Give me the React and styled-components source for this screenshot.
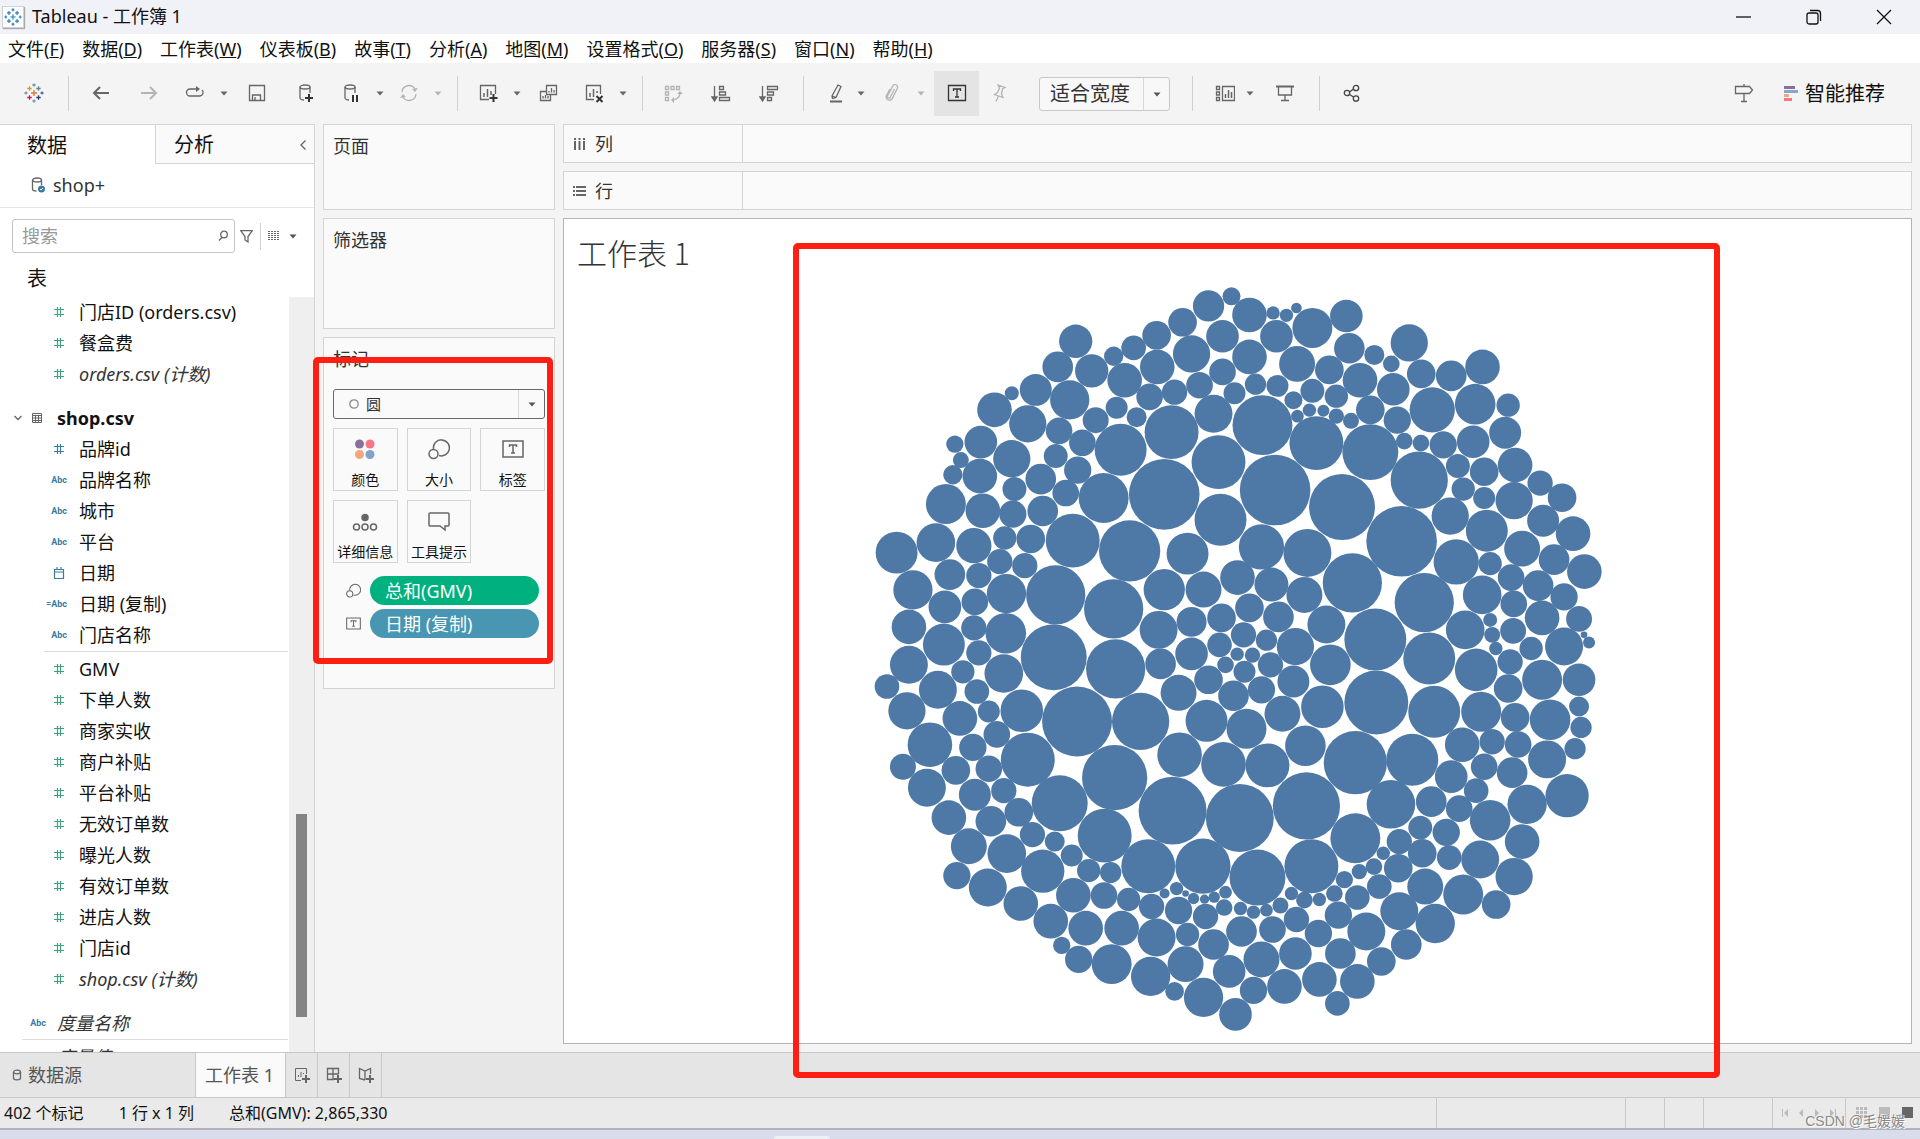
import React from 'react';
import styled, { createGlobalStyle, css } from 'styled-components';

const GlobalStyle = createGlobalStyle`
  *, *::before, *::after { box-sizing: border-box; }
  html, body, #root { height: 100%; }
  body {
    margin: 0;
    background: #d9dcea;
    color: #111;
    font-family: 'Noto Sans', 'Noto Sans CJK SC', sans-serif;
    font-size: 18px;
    line-height: 24px;
  }
  button, input, select { font: inherit; color: inherit; }
  button { background: none; border: 0; padding: 0; margin: 0; }
  svg { display: block; flex: none; }
  h1, h2, ul { margin: 0; padding: 0; font-weight: 400; list-style: none; }
`;

/* ---------- window frame ---------- */

const Window = styled.div`
  position: relative;
  display: flex;
  flex-direction: column;
  height: 100vh;
  min-height: 700px;
`;

const TitleBar = styled.header`
  display: flex;
  align-items: center;
  height: 34px;
  padding: 0 1px 1px 2px;
  background: #f1f2f8;
`;

const AppIcon = styled.span`
  display: flex;
  align-items: center;
  justify-content: center;
  width: 22px;
  height: 22px;
  background: #fff;
  border: 1px solid #d0d0d4;
  box-shadow: 1px 1px 1px #aaa;
`;

const WindowTitle = styled.h1`
  flex: 1;
  padding: 0 0 2px 8px;
  font-size: 18px;
  line-height: 24px;
`;

const CaptionButton = styled.button`
  display: flex;
  align-items: center;
  justify-content: center;
  width: 70px;
  height: 34px;
`;

const MenuBar = styled.nav`
  display: flex;
  align-items: center;
  gap: 18px;
  height: 29px;
  padding-left: 8px;
  background: #fff;
`;

const MenuItem = styled.button`
  white-space: nowrap;
  line-height: 24px;
`;

/* ---------- toolbar ---------- */

const Toolbar = styled.div`
  display: flex;
  align-items: center;
  height: 61px;
  padding: 0 35px 1px 0;
  background: #f4f4f4;
`;

const gapBefore = css`
  margin-left: ${(p) => p.$gap}px;
`;

const ToolButton = styled.button`
  ${gapBefore}
  display: flex;
  align-items: center;
  justify-content: center;
  width: ${(p) => (p.$active ? 45 : 24)}px;
  height: 45px;
  background: ${(p) => (p.$active ? '#e4e4e4' : 'none')};
`;

const CaretButton = styled.button`
  ${gapBefore}
  display: flex;
  align-items: center;
  justify-content: center;
  width: 10px;
  height: 30px;
`;

const Separator = styled.span`
  ${gapBefore}
  width: 1px;
  height: 35px;
  background: #d0d0d0;
`;

const SelectFrame = styled.span`
  ${gapBefore}
  position: relative;
  display: block;
  width: ${(p) => p.$width || '100%'};
  margin-top: ${(p) => (p.$width ? 2 : 0)}px;
`;

const FitSelect = styled.select`
  display: block;
  width: 100%;
  height: 34px;
  padding: 0 32px 0 10px;
  appearance: none;
  background: #f8f8f8;
  border: 1px solid #c8c8c8;
  border-radius: 3px;
  color: #333;
  font-size: 20px;
  line-height: 30px;
`;

const SelectArrow = styled.span`
  position: absolute;
  top: 1px;
  right: 1px;
  bottom: 1px;
  width: 26px;
  display: flex;
  align-items: center;
  justify-content: center;
  border-left: 1px solid #d8d8d8;
  pointer-events: none;
`;

const Spacer = styled.span`
  flex: 1;
`;

const ShowMe = styled.button`
  display: flex;
  align-items: center;
  gap: 7px;
  margin-left: 30px;
  padding-top: 2px;
  font-size: 20px;
  line-height: 28px;
`;

/* ---------- body ---------- */

const Body = styled.main`
  display: flex;
  flex: 1;
  min-height: 0;
  background: #f4f4f4;
`;

const DataPane = styled.aside`
  display: flex;
  flex-direction: column;
  width: 315px;
  min-height: 0;
  background: #fff;
  border-top: 1px solid #d4d4d4;
  border-right: 1px solid #d4d4d4;
`;

const PaneTabs = styled.div`
  display: flex;
  height: 39px;
`;

const PaneTab = styled.button`
  display: flex;
  align-items: center;
  justify-content: space-between;
  width: ${(p) => (p.$active ? '155px' : 'auto')};
  flex: ${(p) => (p.$active ? 'none' : 1)};
  padding: 2px 7px 0 ${(p) => (p.$active ? 27 : 18)}px;
  font-size: 20px;
  line-height: 28px;
  background: ${(p) => (p.$active ? '#fff' : '#fafafa')};
  border: solid #d4d4d4;
  border-width: ${(p) => (p.$active ? '0' : '0 0 1px 1px')};
`;

const DataSource = styled.div`
  display: flex;
  align-items: center;
  gap: 7px;
  height: 44px;
  padding: 0 0 2px 31px;
  color: #333;
  border-bottom: 1px solid #e4e4e4;
`;

const SearchRow = styled.div`
  display: flex;
  align-items: center;
  height: 56px;
  padding: 0 16px 0 12px;
`;

const SearchFrame = styled.label`
  position: relative;
  width: 223px;
`;

const SearchInput = styled.input`
  display: block;
  width: 100%;
  height: 34px;
  padding: 0 30px 0 9px;
  border: 1px solid #c4c4c4;
  border-radius: 3px;
  &::placeholder { color: #999; opacity: 1; }
`;

const SearchGlyph = styled.span`
  position: absolute;
  top: 11px;
  right: 7px;
`;

const SmallButton = styled.button`
  ${gapBefore}
  display: flex;
`;

const ThinLine = styled.span`
  width: 1px;
  height: 27px;
  margin-left: 7px;
  background: #d0d0d0;
`;

const TablesHeading = styled.h2`
  height: 33px;
  padding-left: 27px;
  font-size: 20px;
  line-height: 30px;
`;

const ListArea = styled.div`
  display: flex;
  flex: 1;
  min-height: 0;
`;

const FieldList = styled.div`
  flex: 1;
  overflow: hidden;
`;

const FieldRow = styled.li`
  display: flex;
  align-items: center;
  gap: ${(p) => (p.$top ? 11 : 12)}px;
  height: 31px;
  padding: 0 0 1px ${(p) => (p.$top ? 22 : 43)}px;
  font-style: ${(p) => (p.$italic ? 'italic' : 'normal')};
  color: ${(p) => (p.$italic ? '#333' : '#111')};
  white-space: nowrap;
`;

const FieldIcon = styled.span`
  display: flex;
  justify-content: flex-end;
  width: 24px;
  color: ${(p) => (p.$measure ? '#3fa07d' : '#3a7ca0')};
`;

const TypeText = styled.span`
  font: normal 700 9px/12px Roboto, sans-serif;
`;

const TableRow = styled.div`
  display: flex;
  align-items: center;
  height: 31px;
  margin-top: 13px;
  padding: 0 0 1px 13px;
  font-weight: 700;
`;

const TableName = styled.span`
  padding-left: 15px;
`;

const FieldDivider = styled.div`
  height: 1px;
  margin: 0 1px 2px ${(p) => p.$indent}px;
  background: #dcdcdc;
`;

const TopFields = styled.ul`
  && { margin-top: 13px; }
`;

const ScrollTrack = styled.div`
  display: flex;
  flex-direction: column;
  align-items: center;
  width: 25px;
  background: #efefef;
`;

const TrackPart = styled.span`
  flex: ${(p) => p.$share};
`;

const Thumb = styled.span`
  flex: 203;
  width: 11px;
  background: #848484;
`;

/* ---------- cards ---------- */

const CardColumn = styled.section`
  display: flex;
  flex-direction: column;
  gap: 8px;
  width: 232px;
  margin-left: 8px;
`;

const Card = styled.div`
  position: relative;
  min-height: ${(p) => p.$min}px;
  padding: 9px;
  background: #fafafa;
  border: 1px solid #d4d4d4;
`;

const CardTitle = styled.h2`
  color: #333;
  font-size: 18px;
  line-height: 24px;
`;

const MarkSelect = styled.select`
  display: block;
  width: 100%;
  height: 30px;
  padding: 0 28px 0 32px;
  appearance: none;
  background: #fafafa;
  border: 1px solid #666;
  border-radius: 3px;
  color: #333;
  font-size: 15px;
  line-height: 24px;
`;

const MarkSelectWrap = styled.div`
  margin: 18px 0 9px;
`;

const SelectGlyph = styled.span`
  position: absolute;
  top: 10px;
  left: 16px;
  pointer-events: none;
`;

const MarkGrid = styled.div`
  display: grid;
  grid-template-columns: repeat(3, 1fr);
  gap: 9px;
`;

const MarkButton = styled.button`
  display: flex;
  flex-direction: column;
  align-items: center;
  justify-content: space-between;
  height: 63px;
  padding: 9px 0 0;
  border: 1px solid #d4d4d4;
  font-size: 14px;
  line-height: 20px;
  white-space: nowrap;
`;

const PillList = styled.div`
  display: grid;
  gap: 4px;
  padding: 13px 6px 0 13px;
`;

const PillRow = styled.div`
  display: flex;
  align-items: center;
  gap: 9px;
`;

const Pill = styled.button`
  flex: 1;
  height: 29px;
  padding: 0 15px;
  border-radius: 15px;
  background: ${(p) => p.$color};
  color: #fff;
  text-align: left;
  line-height: 28px;
`;

const Highlight = styled.div`
  position: absolute;
  inset: ${(p) => p.$inset};
  z-index: 2;
  border: 6px solid #ff1f12;
  border-radius: 5px;
  pointer-events: none;
`;

/* ---------- view ---------- */

const ViewColumn = styled.section`
  display: flex;
  flex: 1;
  flex-direction: column;
  gap: 8px;
  min-width: 0;
  padding: 0 8px 8px;
`;

const Shelf = styled.div`
  display: flex;
  height: 39px;
  background: #fafafa;
  border: 1px solid #d4d4d4;
`;

const ShelfLabel = styled.div`
  display: flex;
  align-items: center;
  gap: 9px;
  width: 179px;
  padding-left: 9px;
  color: #333;
  border-right: 1px solid #d4d4d4;
`;

const Sheet = styled.div`
  position: relative;
  display: flex;
  flex: 1;
  flex-direction: column;
  min-height: 0;
  background: #fff;
  border: 1px solid #b4b4b4;
`;

const SheetTitle = styled.h2`
  height: 61px;
  padding: 13px 13px 0;
  color: #333;
  font-family: 'Noto Sans CJK SC', sans-serif;
  font-size: 30px;
  font-weight: 300;
  line-height: 40px;
`;

const ChartArea = styled.div`
  display: flex;
  flex: 1;
  min-height: 0;
  padding-right: 4px;
  svg { width: 100%; height: 100%; }
`;

/* ---------- bottom ---------- */

const SheetTabs = styled.nav`
  display: flex;
  height: 46px;
  background: #e5e5e5;
  border: solid #c8c8c8;
  border-width: 1px 0;
`;

const SheetTab = styled.button`
  display: flex;
  align-items: center;
  gap: 6px;
  width: ${(p) => p.$width}px;
  padding-left: ${(p) => (p.$active ? 9 : 12)}px;
  background: ${(p) => (p.$active ? '#fafafa' : 'none')};
  color: #555;
  border-right: 1px solid #c8c8c8;
  white-space: nowrap;
`;

const NewTab = styled.button`
  display: flex;
  align-items: center;
  justify-content: center;
  width: 32px;
  border-right: 1px solid #c8c8c8;
`;

const StatusBar = styled.footer`
  display: flex;
  align-items: center;
  height: 32px;
  padding-left: 4px;
  background: #eaeaea;
  border-bottom: 2px solid #b0b1bd;
  font-size: 16px;
`;

const StatusText = styled.span`
  padding-right: 35px;
  white-space: nowrap;
`;

const StatusCell = styled.span`
  display: flex;
  align-items: center;
  justify-content: space-between;
  width: ${(p) => p.$width}px;
  height: 100%;
  padding: 0 ${(p) => p.$pad || 0}px;
  border-left: 1px solid #c8c8c8;
`;

const Desktop = styled.div`
  display: flex;
  justify-content: center;
  height: 9px;
  padding: 6px 316px 0 0;
`;

const TaskbarEdge = styled.span`
  width: 56px;
  height: 3px;
  background: #eef0f7;
  border-radius: 4px 4px 0 0;
`;

const Watermark = styled.span`
  position: absolute;
  right: 15px;
  bottom: 8px;
  color: #8a8a8a;
  font: 14px/20px 'Liberation Sans', 'Noto Sans CJK SC', sans-serif;
  text-shadow: 1px 1px 0 #fff;
`;

/* ---------- icons ---------- */

const Icon = ({ w = 20, h = 20, color = '#666', children, ...rest }) => (
  <svg width={w} height={h} viewBox={`0 0 ${w} ${h}`} fill="none" stroke={color} strokeWidth="1.3" aria-hidden="true" {...rest}>
    {children}
  </svg>
);

const Caret = ({ color = '#555' }) => (
  <svg width="8" height="5" viewBox="0 0 8 5" fill={color} aria-hidden="true"><path d="M0.500 0.500h7L4 4.500z" /></svg>
);

const plus = (x, y, r) => `M${x - r} ${y}h${2 * r}M${x} ${y - r}v${2 * r}`;

const Logo = ({ size = 20, mono }) => {
  const marks = [
    [10, 10, 3, '#e8762c'], [5.500, 5.500, 2.200, '#eb912c'], [14.500, 5.500, 2.200, '#59879b'], [5.500, 14.500, 2.200, '#c72035'],
    [14.500, 14.500, 2.200, '#1f447e'], [10, 2, 1.600, '#5c9aa8'], [10, 18, 1.600, '#7199a6'], [2, 10, 1.600, '#7199a6'], [18, 10, 1.600, '#5b6591'],
  ];
  return (
    <svg width={size} height={size} viewBox="0 0 20 20" fill="none" strokeWidth="1.3" aria-hidden="true">
      {marks.map(([x, y, r, c]) => <path key={`${x}-${y}`} d={plus(x, y, r)} stroke={mono || c} />)}
    </svg>
  );
};

const icons = {
  back: <Icon strokeWidth="2"><path d="M18 10H3M9 4l-6 6 6 6" /></Icon>,
  forward: <Icon color="#b4b4b4" strokeWidth="2"><path d="M2 10h15M11 4l6 6-6 6" /></Icon>,
  redo: <Icon><path d="M12 6H5a3.500 3.500 0 0 0 0 7h10a3.500 3.500 0 0 0 2-6" /><path d="M11 3l4 3-4 3z" fill="#666" stroke="none" /></Icon>,
  save: <Icon><path d="M2.500 2.500h15v15h-15zM5.500 17v-5h8v5M8 17v-3" /></Icon>,
  addSource: (
    <Icon><path d="M5 4v11c0 1 2 2 4 2M15 4v6" /><ellipse cx="10" cy="4" rx="5" ry="2" /><path d="M14 11v8M10 15h8" stroke="#333" strokeWidth="2" /></Icon>
  ),
  pause: (
    <Icon><path d="M4 4v11c0 1 2 2 4 2M14 4v6" /><ellipse cx="9" cy="4" rx="5" ry="2" /><path d="M12 12v7M16 12v7" stroke="#333" strokeWidth="2" /></Icon>
  ),
  refresh: (
    <Icon color="#b4b4b4"><path d="M3 9a7 7 0 0 1 13-3M17 11a7 7 0 0 1-13 3" /><path d="M19 5l-3 4-3-3zM1 15l3-4 3 3z" fill="#b4b4b4" stroke="none" /></Icon>
  ),
  newSheet: (
    <Icon><path d="M11 16.500H2.500v-14h15V11" /><path d="M6 14v-4M9.500 14V6M13 12V8" strokeWidth="1.500" /><path d="M15.500 11v8M11.500 15h8" stroke="#333" strokeWidth="2" /></Icon>
  ),
  duplicate: (
    <Icon><path d="M8.500 2.500h10v9h-10zM8 8.500H2.500v9h10V12" /><path d="M11 9.500V8M13.500 9.500V5M16 9.500V7M5 15.500V13M7.500 15.500V12M10 15.500V13" /></Icon>
  ),
  clear: (
    <Icon><path d="M10 16.500H2.500v-14h14V11" /><path d="M6 14v-4M9.500 14V6M13 10V8" strokeWidth="1.500" /><path d="M12.500 13l6 6M18.500 13l-6 6" stroke="#333" strokeWidth="2" /></Icon>
  ),
  swap: (
    <Icon color="#b4b4b4"><path d="M2.500 3.500h3v3h-3zM8 3.500h3v3H8zM13.500 3.500h3v3h-3zM2.500 9h3v3h-3zM2.500 14.500h3v3h-3zM17 10c0 4-2 6-7 7" /><path d="M14 11l3-3 3 3zM11 14l-3 3 3 3z" fill="#b4b4b4" stroke="none" /></Icon>
  ),
  asc: <Icon><path d="M3.500 3v13M8.500 3.500h4v3h-4zM8.500 9h6v3h-6zM8.500 14.500h10v3h-10z" /><path d="M1 14h5l-2.500 4z" fill="#666" /></Icon>,
  desc: <Icon><path d="M3.500 3v13M8.500 3.500h10v3h-10zM8.500 9h6v3h-6zM8.500 14.500h4v3h-4z" /><path d="M1 14h5l-2.500 4z" fill="#666" /></Icon>,
  highlight: <Icon><path d="M6 13L12 2l3 1.500-5 11-3.500 1zM6 13l4 1.500" /><path d="M4 18.500h12" strokeWidth="2" /></Icon>,
  clip: <Icon color="#b4b4b4"><path d="M12.500 6l-4 8a1.500 1.500 0 0 1-3-1l5-9.500a2.500 2.500 0 0 1 5 1.500l-5.500 11a3.500 3.500 0 0 1-6-2.500L8 6" /></Icon>,
  label: <Icon color="#333"><path d="M1.500 2.500h17v15h-17zM6.500 8V6h7v2M10 6v8M8 14h4" /></Icon>,
  pin: <Icon color="#b4b4b4"><path d="M9 2l7 2.500-2.500 1.500-1 5 1.500 3.500L5.500 11.500 8.500 9.500 10.500 5zM9.500 13L7 18.500" /></Icon>,
  cards: (
    <Icon><path d="M1.500 3.500h3v3h-3zM1.500 9h3v3h-3zM1.500 14.500h3v3h-3zM7.500 3.500h12v14h-12z" /><path d="M10.500 15v-4M13.500 15V7M16.500 15V9" strokeWidth="1.500" /></Icon>
  ),
  present: <Icon><path d="M1 3.500h18" strokeWidth="2" /><path d="M3.500 4v8h13V4M10 12v6M6 17.500h8" /></Icon>,
  share: <Icon color="#444"><circle cx="5" cy="10" r="2.700" /><circle cx="14" cy="5" r="2.700" /><circle cx="14" cy="15.500" r="2.700" /><path d="M7.500 9L11.500 6M7.500 11.500l4 2.500" /></Icon>,
};

const Signpost = () => (
  <Icon w={20} h={20}><path d="M10 1v2M10 11v8M7 18.500h6M1.500 3.500h14l3 3.500-3 3.500h-14z" /></Icon>
);

const ShowMeIcon = () => (
  <svg width="14" height="16" viewBox="0 0 14 16" aria-hidden="true">
    <path d="M0 0h11v3H0z" fill="#8a6f9b" /><path d="M0 4h14v3H0z" fill="#86a6cf" />
    <path d="M0 8h5v3H0z" fill="#f2a77c" /><path d="M0 12h8v3H0z" fill="#fb7384" />
  </svg>
);

const SizeIcon = ({ w = 22 }) => (
  <svg width={w} height={w} viewBox="0 0 22 22" fill="none" stroke="#666" strokeWidth="1.500" aria-hidden="true">
    <path d="M5.500 11a8 8 0 1 1 5.500 6.500" /><circle cx="5.500" cy="16" r="4.500" />
  </svg>
);

const TextIcon = ({ w = 22 }) => (
  <svg width={w} height={w} viewBox="0 0 22 22" fill="none" stroke="#666" strokeWidth="1.500" aria-hidden="true">
    <path d="M1 3h20v16H1zM7.500 9V7h7v2M11 7v8M9 15h4" />
  </svg>
);

const markIcons = {
  color: (
    <svg width="22" height="22" viewBox="0 0 22 22" aria-hidden="true">
      <circle cx="5.500" cy="6" r="4.500" fill="#8a6f9b" /><circle cx="16" cy="6" r="4.500" fill="#fb7384" />
      <circle cx="5.500" cy="16.500" r="4.500" fill="#f2a77c" /><circle cx="16" cy="16.500" r="4.500" fill="#7fa3cc" />
    </svg>
  ),
  size: <SizeIcon />,
  label: <TextIcon />,
  detail: (
    <svg width="26" height="22" viewBox="0 0 26 22" fill="none" stroke="#666" strokeWidth="1.500" aria-hidden="true">
      <circle cx="13" cy="7.500" r="3" fill="#666" /><circle cx="4.500" cy="17" r="3" /><circle cx="13" cy="17" r="3" /><circle cx="21.500" cy="17" r="3" />
    </svg>
  ),
  tooltip: (
    <svg width="22" height="22" viewBox="0 0 22 22" fill="none" stroke="#666" strokeWidth="1.500" aria-hidden="true">
      <path d="M2 3h18q1 0 1 1v11q0 1-1 1h-3v4l-5-4H2q-1 0-1-1V4q0-1 1-1z" />
    </svg>
  ),
};

const HashIcon = () => (
  <svg width="16" height="12" viewBox="0 0 16 12" fill="none" stroke="currentColor" strokeWidth="1.200" aria-hidden="true">
    <path d="M3 3.500h10M3 8.500h10M6.500 1v10M9.500 1v10" />
  </svg>
);

const CalendarIcon = () => (
  <svg width="16" height="12" viewBox="0 0 16 12" fill="none" stroke="currentColor" strokeWidth="1.200" aria-hidden="true">
    <path d="M3.500 2.500h9v9h-9zM3 5h10M6 0v3M10 0v3" />
  </svg>
);

/* ---------- data ---------- */

const menus = [
  ['文件', 'F'], ['数据', 'D'], ['工作表', 'W'], ['仪表板', 'B'], ['故事', 'T'], ['分析', 'A'],
  ['地图', 'M'], ['设置格式', 'O'], ['服务器', 'S'], ['窗口', 'N'], ['帮助', 'H'],
];

const toolsLeft = [
  ['logo', 22, '起始页'], ['|', 22], ['back', 20, '撤消'], ['forward', 24, '重做'], ['redo', 22, '重播'], ['v', 12], ['save', 16, '保存'],
  ['addSource', 24, '新建数据源'], ['pause', 22, '暂停自动更新'], ['v', 12], ['refresh', 12, '运行更新'], ['v-', 12], ['|', 14],
  ['newSheet', 18, '新建工作表'], ['v', 12], ['duplicate', 14, '复制'], ['clear', 22, '清除工作表'], ['v', 12], ['|', 14],
  ['swap', 18, '交换行和列'], ['asc', 24, '升序排序'], ['desc', 24, '降序排序'], ['|', 22], ['highlight', 20, '突出显示'], ['v', 8],
  ['clip', 14, '组成员'], ['v-', 12], ['label', 8, '显示标记标签'], ['pin', 8, '固定轴'],
];

const toolsRight = [['|', 22], ['cards', 20, '显示/隐藏卡'], ['v', 8], ['present', 18, '演示模式'], ['|', 22], ['share', 20, '共享']];

const orderFields = [['#m', '门店ID (orders.csv)'], ['#m', '餐盒费'], ['#m', 'orders.csv (计数)', true]];
const shopDimensions = [
  ['#', '品牌id'], ['Abc', '品牌名称'], ['Abc', '城市'], ['Abc', '平台'], ['cal', '日期'], ['=Abc', '日期 (复制)'], ['Abc', '门店名称'],
];
const shopMeasures = [
  ['#m', 'GMV'], ['#m', '下单人数'], ['#m', '商家实收'], ['#m', '商户补贴'], ['#m', '平台补贴'], ['#m', '无效订单数'],
  ['#m', '曝光人数'], ['#m', '有效订单数'], ['#m', '进店人数'], ['#m', '门店id'], ['#m', 'shop.csv (计数)', true],
];

const marks = [['color', '颜色'], ['size', '大小'], ['label', '标签'], ['detail', '详细信息'], ['tooltip', '工具提示']];

/* Packed bubbles as "x,y,radius" in chart units, one block per quadrant. */
const bubbleBlocks = [
  {
    dx: 0, dy: 0,
    items: `1044,107,47 645,213,50 966,156,43 888,195,43 819,233,37 759,258,29 1086,198,49 993,251,56 890,290,52 792,330,52
    693,302,50 591,290,46 525,359,48 453,369,21 627,389,59 401,419,52 501,461,56 1086,305,40 1017,345,40 942,366,38 867,380,40
    768,413,33 828,441,30 705,450,39 1059,431,57 933,486,81 780,539,78 1074,576,81 595,482,40 665,518,40 585,558,36 651,600,41
    615,669,40 360,516,49 282,522,26 300,570,24 276,614,29 453,566,56 357,618,52 540,627,46 461,657,36 255,702,60 366,722,52
    456,732,41 546,723,46 729,684,75 911,673,106 1080,749,78 107,848,63 225,818,58 339,827,53 432,804,35 510,807,43 636,812,81
    807,843,92 981,851,63 417,875,38 492,887,38 267,914,46 354,917,38 156,960,59 437,971,59 585,975,89 759,1017,89 911,959,62
    1029,959,54 252,1011,49 342,996,40 144,1071,52 339,1074,38 435,1090,61 249,1124,63 894,1080,57 993,1056,45 1083,1044,43
    354,1149,38 993,1152,49 1077,1125,37`,
  },
  {
    dx: 1110, dy: 0,
    items: `3,78,27 12,369,33 21,923,52 57,134,52 128,128,20 168,135,20 198,113,16 246,173,60 348,137,49 138,198,49 57,260,52
    200,281,54 357,234,46 432,254,30 483,281,25 537,218,56 75,342,32 141,347,33 297,299,43 389,330,52 489,357,49 573,311,43
    663,317,46 757,290,52 189,390,27 246,362,36 318,378,35 201,438,19 237,420,20 279,422,18 318,438,23 362,452,24 420,419,43
    501,450,41 606,419,68 735,402,61 834,405,35 825,488,48 96,465,90 258,519,81 420,546,84 522,513,25 572,519,25 639,524,41
    729,515,49 855,585,52 683,588,36 762,605,43 930,639,38 996,683,43 699,657,35 762,684,33 852,692,56 939,752,48 1029,791,52
    134,660,106 335,711,99 567,630,86 660,738,56 514,814,106 770,782,63 93,831,68 231,849,72 876,836,54 972,869,46 1063,905,52
    678,876,68 780,881,35 843,923,40 924,947,46 1002,981,41 123,944,51 222,975,54 366,939,89 582,998,89 756,975,58 851,1002,40
    57,1014,43 144,1041,46 39,1095,38 108,1111,32 288,1064,57 705,1080,58 780,1050,21 786,1095,24 849,1083,39 936,1044,52
    1047,1047,39 1062,1095,10 1077,1118,18 435,1109,93 797,1136,20 597,1166,78 903,1136,35 1002,1130,57 195,1130,56 300,1185,61`,
  },
  {
    dx: 0, dy: 1140,
    items: `144,45,57 579,22,99 765,57,89 900,42,46 78,110,37 306,66,35 429,71,58 231,120,57 348,125,37 384,185,33 138,183,56
    297,206,52 483,183,64 649,215,105 840,215,86 954,129,54 1044,90,43 1095,45,25 1038,213,63 207,285,67 336,293,41 408,254,40
    285,362,43 384,357,40 501,330,81 126,351,39 198,414,57 342,435,48 429,423,38 762,384,98 957,315,67 1089,344,67 264,504,52
    390,515,46 474,488,43 597,461,84 732,558,81 936,483,102 515,555,38 582,576,30 633,618,33 324,590,54 438,612,58 546,665,65
    684,663,35 750,669,32 288,678,41 381,714,57 480,762,52 638,737,52 730,738,40 804,750,35 863,650,81 1027,650,83 912,732,15
    948,717,20 975,732,10 999,747,17 1032,749,14 1061,743,17 1095,728,19 873,771,38 954,783,41 1035,801,38 1091,774,25
    570,815,52 675,836,52 783,836,52 888,864,57 981,855,35 1059,885,46 603,888,26 654,930,41 753,944,60 870,981,59 975,944,54
    942,1026,28 1029,1044,59 1106,966,49`,
  },
  {
    dx: 1110, dy: 1140,
    items: `9,138,46 15,1095,49 28,505,102 20,13,20 66,16,23 120,45,38 42,66,33 93,120,41 189,95,48 156,192,54 276,171,64
    438,158,96 612,186,78 738,60,64 840,36,38 834,116,43 936,90,60 1047,90,49 753,186,60 855,203,43 960,210,61 1047,170,30
    1053,233,32 1035,297,32 225,288,61 48,237,60 111,347,66 375,339,95 546,330,78 696,285,52 786,276,38 864,284,40 951,329,57
    663,381,49 762,351,40 846,369,46 228,469,101 482,464,73 603,456,46 738,423,37 687,477,40 780,512,61 891,464,59 1011,438,65
    375,566,75 570,534,36 648,548,41 507,576,38 576,611,43 657,624,37 750,630,57 876,576,52 852,681,56 459,611,20 431,651,25
    387,666,23 504,656,43 585,711,54 699,735,60 798,765,43 243,650,81 342,690,26 447,711,37 81,684,84 183,732,20 222,752,25
    267,750,20 312,732,25 381,744,37 324,797,41 507,785,57 615,822,59 30,777,20 69,788,20 108,782,19 150,768,24 198,810,38
    33,846,46 126,840,40 264,852,41 408,846,57 528,885,46 93,930,54 195,912,49 330,912,46 453,936,43 69,1023,41 162,1011,52
    267,990,52 381,996,52 321,1062,37`,
  },
];

const bubbles = bubbleBlocks.flatMap(({ dx, dy, items }) =>
  items.trim().split(/\s+/).map((item) => {
    const [x, y, r] = item.split(',').map(Number);
    return { x: x + dx, y: y + dy, r };
  })
);

/* ---------- components ---------- */

const Tools = ({ items }) =>
  items.map(([name, gap, title], i) => {
    if (name === '|') return <Separator key={i} $gap={gap} />;
    if (name[0] === 'v') {
      return <CaretButton key={i} $gap={gap} aria-label="更多"><Caret color={name === 'v' ? '#666' : '#b4b4b4'} /></CaretButton>;
    }
    return (
      <ToolButton key={i} $gap={gap} $active={name === 'label'} aria-label={title}>
        {name === 'logo' ? <Logo /> : icons[name]}
      </ToolButton>
    );
  });

const Field = ({ type, name, italic, top }) => (
  <FieldRow $italic={italic} $top={top}>
    <FieldIcon $measure={type === '#m'}>
      {type[0] === '#' && <HashIcon />}
      {type === 'cal' && <CalendarIcon />}
      {type.endsWith('Abc') && <TypeText>{type}</TypeText>}
    </FieldIcon>
    <span>{name}</span>
  </FieldRow>
);

const Fields = ({ items }) => (
  <ul>{items.map(([type, name, italic]) => <Field key={name} type={type} name={name} italic={italic} />)}</ul>
);

const DataSidebar = () => (
  <DataPane>
    <PaneTabs>
      <PaneTab $active>数据</PaneTab>
      <PaneTab>分析<Icon w={8} h={12}><path d="M6.500 1.500L2 6l4.500 4.500" /></Icon></PaneTab>
    </PaneTabs>
    <DataSource>
      <Icon w={15} h={16}>
        <path d="M1.500 3v9c0 1 1.500 2 4 2M10.500 3v5" /><ellipse cx="6" cy="3" rx="4.500" ry="2" />
        <circle cx="10.500" cy="12" r="3.500" fill="#3a7ca0" stroke="none" /><path d="M9 12l1 1 2-2" stroke="#fff" strokeWidth="1" />
      </Icon>
      shop+
    </DataSource>
    <SearchRow>
      <SearchFrame>
        <SearchInput placeholder="搜索" aria-label="搜索" />
        <SearchGlyph><Icon w={10} h={12}><circle cx="6" cy="4.500" r="3.300" /><path d="M4 7.500L1 10.500" /></Icon></SearchGlyph>
      </SearchFrame>
      <SmallButton $gap={5} aria-label="筛选"><Icon w={13} h={13}><path d="M0.700 0.700h11.600L8 6.500v5.500l-3-2V6.500z" /></Icon></SmallButton>
      <ThinLine />
      <SmallButton $gap={7} aria-label="视图">
        <Icon w={12} h={10} strokeWidth="1" strokeDasharray="2 1"><path d="M0 .5h12M0 2.500h12M0 4.500h12M0 6.500h12M0 8.500h12" /></Icon>
      </SmallButton>
      <SmallButton $gap={9} aria-label="视图选项"><Caret /></SmallButton>
    </SearchRow>
    <TablesHeading>表</TablesHeading>
    <ListArea>
      <FieldList>
        <Fields items={orderFields} />
        <TableRow>
          <Icon w={10} h={8}><path d="M1.500 2L5 5.500 8.500 2" /></Icon>
          <Icon w={19} h={10} strokeWidth="1"><path d="M9.500.5h9v9h-9zM9 2.500h10M9 5h10M9 7.500h10M12.500 2.500v7M15.500 2.500v7" /></Icon>
          <TableName>shop.csv</TableName>
        </TableRow>
        <Fields items={shopDimensions} />
        <FieldDivider $indent={44} />
        <Fields items={shopMeasures} />
        <TopFields><Field type="Abc" name="度量名称" italic top /></TopFields>
        <FieldDivider $indent={22} />
        <ul><Field type="#m" name="度量值" italic top /></ul>
      </FieldList>
      <ScrollTrack><TrackPart $share={517} /><Thumb /><TrackPart $share={35} /></ScrollTrack>
    </ListArea>
  </DataPane>
);

const Cards = () => (
  <CardColumn>
    <Card $min={86}><CardTitle>页面</CardTitle></Card>
    <Card $min={111}><CardTitle>筛选器</CardTitle></Card>
    <Card $min={352}>
      <CardTitle>标记</CardTitle>
      <MarkSelectWrap>
        <SelectFrame $gap={0}>
          <MarkSelect aria-label="标记类型"><option>圆</option></MarkSelect>
          <SelectGlyph><Icon w={10} h={10} color="#888"><circle cx="5" cy="5" r="4.200" /></Icon></SelectGlyph>
          <SelectArrow><Caret /></SelectArrow>
        </SelectFrame>
      </MarkSelectWrap>
      <MarkGrid>
        {marks.map(([icon, label]) => <MarkButton key={icon}>{markIcons[icon]}{label}</MarkButton>)}
      </MarkGrid>
      <PillList>
        <PillRow><SizeIcon w={15} /><Pill $color="#00b180">总和(GMV)</Pill></PillRow>
        <PillRow><TextIcon w={15} /><Pill $color="#4996b2">日期 (复制)</Pill></PillRow>
      </PillList>
      <Highlight $inset="19px 1px 24px -11px" />
    </Card>
  </CardColumn>
);

const View = () => (
  <ViewColumn>
    <Shelf>
      <ShelfLabel>
        <Icon w={13} h={12} strokeWidth="2"><path d="M2 0v2M2 3v9M6.500 0v2M6.500 3v9M11 0v2M11 3v9" /></Icon>列
      </ShelfLabel>
    </Shelf>
    <Shelf>
      <ShelfLabel>
        <Icon w={13} h={12} strokeWidth="2"><path d="M0 2h2M3 2h10M0 6h2M3 6h10M0 10h2M3 10h10" /></Icon>行
      </ShelfLabel>
    </Shelf>
    <Sheet>
      <SheetTitle>工作表 1</SheetTitle>
      <ChartArea>
        <svg viewBox="0 29 2250 2292" fill="#4e79a7" role="img" aria-label="气泡图">
          {bubbles.map(({ x, y, r }) => <circle key={`${x}-${y}`} cx={x} cy={y} r={r} />)}
        </svg>
      </ChartArea>
      <Highlight $inset="24px 191px -35px 229px" />
    </Sheet>
  </ViewColumn>
);

const Bottom = () => (
  <>
    <SheetTabs>
      <SheetTab $width={196}>
        <Icon w={10} h={12}><path d="M1.500 3v6c0 2.500 7 2.500 7 0V3" /><ellipse cx="5" cy="3" rx="3.500" ry="1.800" /></Icon>数据源
      </SheetTab>
      <SheetTab $width={90} $active>工作表 1</SheetTab>
      <NewTab aria-label="新建工作表">
        <Icon w={16} h={16} strokeWidth="1"><path d="M7 13.500H1.500v-12h11V7M4.500 10V8M7 10V5M9.500 7V6" /><path d="M12 8v8M8 12h8" strokeWidth="2" /></Icon>
      </NewTab>
      <NewTab aria-label="新建仪表板">
        <Icon w={16} h={16}><path d="M8 12.500H1.500v-11h11V7M1.500 7h11M7 1.500v11" /><path d="M12 8v8M8 12h8" strokeWidth="2" /></Icon>
      </NewTab>
      <NewTab aria-label="新建故事">
        <Icon w={16} h={16}><path d="M7 13L1.500 11.500v-10L7 4l5.500-2.500V7M7 4v9" /><path d="M12 8v8M8 12h8" strokeWidth="2" /></Icon>
      </NewTab>
    </SheetTabs>
    <StatusBar>
      <StatusText>402 个标记</StatusText>
      <StatusText>1 行 x 1 列</StatusText>
      <StatusText>总和(GMV): 2,865,330</StatusText>
      <Spacer />
      <StatusCell $width={189} />
      <StatusCell $width={39} />
      <StatusCell $width={39} />
      <StatusCell $width={69} />
      <StatusCell $width={73} $pad={9}>
        <svg width="54" height="8" viewBox="0 0 54 8" fill="#bbb" aria-hidden="true">
          <path d="M0 0h1v8H0zM6 0v8L2 4zM21 0v8l-4-4zM33 0v8l4-4zM48 0v8l4-4zM53 0h1v8h-1z" />
        </svg>
      </StatusCell>
      <StatusCell $width={75} $pad={7}>
        <svg width="60" height="12" viewBox="0 0 60 12" fill="#bbb" aria-hidden="true">
          <path d="M3 0h3v3H3zM7 0h3v3H7zM11 0h3v3h-3zM3 4h3v3H3zM7 4h3v3H7zM11 4h3v3h-3zM3 8h3v3H3zM7 8h3v3H7zM11 8h3v3h-3z" />
          <path d="M26 0h11v7H26zM26 8h3v3h-3zM30 8h3v3h-3zM34 8h3v3h-3z" />
          <path d="M49 0h11v11H49z" fill="#666" />
        </svg>
      </StatusCell>
    </StatusBar>
    <Desktop><TaskbarEdge /></Desktop>
  </>
);

export default function App() {
  return (
    <Window>
      <GlobalStyle />
      <TitleBar>
        <AppIcon><Logo size={18} mono="#2a7fb5" /></AppIcon>
        <WindowTitle>Tableau - 工作簿 1</WindowTitle>
        <CaptionButton aria-label="最小化"><Icon w={16} h={16} color="#111"><path d="M0 8h15" /></Icon></CaptionButton>
        <CaptionButton aria-label="还原">
          <Icon w={16} h={16} color="#111"><rect x="1" y="4" width="11" height="11" rx="2" /><path d="M4 1.500h7.500q3 0 3 3V12" /></Icon>
        </CaptionButton>
        <CaptionButton aria-label="关闭"><Icon w={16} h={16} color="#111"><path d="M1 1l14 14M15 1L1 15" /></Icon></CaptionButton>
      </TitleBar>
      <MenuBar>
        {menus.map(([name, key]) => <MenuItem key={key}>{name}(<u>{key}</u>)</MenuItem>)}
      </MenuBar>
      <Toolbar>
        <Tools items={toolsLeft} />
        <SelectFrame $gap={28} $width="131px">
          <FitSelect aria-label="适合"><option>适合宽度</option></FitSelect>
          <SelectArrow><Caret /></SelectArrow>
        </SelectFrame>
        <Tools items={toolsRight} />
        <Spacer />
        <Signpost />
        <ShowMe><ShowMeIcon />智能推荐</ShowMe>
      </Toolbar>
      <Body>
        <DataSidebar />
        <Cards />
        <View />
      </Body>
      <Bottom />
      <Watermark>CSDN @毛媛媛</Watermark>
    </Window>
  );
}
